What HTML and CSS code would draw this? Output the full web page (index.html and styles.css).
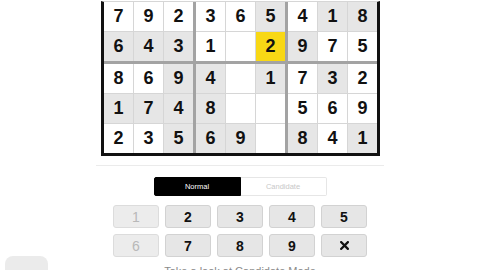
FILE: index.html
```html
<!DOCTYPE html>
<html>
<head>
<meta charset="utf-8">
<link rel="stylesheet" href="styles.css">
</head>
<body>
<div class="page">
  <div class="board">
    <div class="box r2">
      <div class="cell">7</div><div class="cell">9</div><div class="cell">2</div>
      <div class="cell g">6</div><div class="cell g">4</div><div class="cell g">3</div>
    </div>
    <div class="box r2">
      <div class="cell">3</div><div class="cell">6</div><div class="cell g">5</div>
      <div class="cell">1</div><div class="cell"></div><div class="cell y">2</div>
    </div>
    <div class="box r2">
      <div class="cell">4</div><div class="cell g">1</div><div class="cell g">8</div>
      <div class="cell g">9</div><div class="cell">7</div><div class="cell">5</div>
    </div>
    <div class="box">
      <div class="cell">8</div><div class="cell">6</div><div class="cell g">9</div>
      <div class="cell g">1</div><div class="cell g">7</div><div class="cell g">4</div>
      <div class="cell">2</div><div class="cell">3</div><div class="cell g">5</div>
    </div>
    <div class="box">
      <div class="cell g">4</div><div class="cell"></div><div class="cell g">1</div>
      <div class="cell g">8</div><div class="cell"></div><div class="cell"></div>
      <div class="cell g">6</div><div class="cell g">9</div><div class="cell"></div>
    </div>
    <div class="box">
      <div class="cell">7</div><div class="cell g">3</div><div class="cell">2</div>
      <div class="cell">5</div><div class="cell">6</div><div class="cell">9</div>
      <div class="cell g">8</div><div class="cell">4</div><div class="cell g">1</div>
    </div>
  </div>
  <div class="divider"></div>
  <div class="toggle">
    <div class="mode active">Normal</div>
    <div class="mode">Candidate</div>
  </div>
  <div class="keypad">
    <div class="key off">1</div>
    <div class="key">2</div>
    <div class="key">3</div>
    <div class="key">4</div>
    <div class="key">5</div>
    <div class="key off">6</div>
    <div class="key">7</div>
    <div class="key">8</div>
    <div class="key">9</div>
    <div class="key"><svg class="xicon" viewBox="0 0 8 8" width="9" height="9"><path d="M1 1L7 7M7 1L1 7" stroke="#111" stroke-width="2" stroke-linecap="square"/></svg></div>
  </div>
  <div class="hint">Take a look at Candidate Mode</div>
</div>
<div class="fab"></div>
</body>
</html>
```
FILE: styles.css
```css
html, body {
  margin: 0;
  padding: 0;
  background: #fff;
  overflow: hidden;
}
body {
  font-family: "Liberation Sans", Arial, sans-serif;
  width: 480px;
  height: 270px;
}
.page {
  display: flex;
  flex-direction: column;
  align-items: center;
  padding-top: 1px;
}
.board {
  display: grid;
  grid-template-columns: repeat(3, 89px);
  grid-template-rows: 59px 89px;
  gap: 3px;
  background: #a3a3a3;
  border: 3px solid #111;
  border-top: 1px solid #d6d6d6;
  margin-left: 1px;
}
.box {
  display: grid;
  grid-template-columns: repeat(3, 29px);
  grid-template-rows: repeat(3, 29px);
  gap: 1px;
  background: #d6d6d6;
}
.box.r2 {
  grid-template-rows: repeat(2, 29px);
}
.cell {
  background: #fff;
  display: flex;
  align-items: center;
  justify-content: center;
  font-weight: bold;
  font-size: 18px;
  color: #111;
}
.cell.g { background: #e6e6e6; }
.cell.y { background: #f8d815; }
.divider {
  width: 288px;
  height: 1px;
  background: #ebebeb;
  margin-top: 9px;
}
.toggle {
  display: flex;
  margin-top: 11px;
}
.mode {
  width: 86px;
  height: 19px;
  display: flex;
  align-items: center;
  justify-content: center;
  font-size: 7.5px;
  color: #c8c8c8;
  border: 1px solid #e6e6e6;
  border-left: none;
  border-radius: 0 2px 2px 0;
  box-sizing: border-box;
}
.mode.active {
  width: 87px;
  background: #000;
  color: #fff;
  border: 1px solid #000;
  border-radius: 2px 0 0 2px;
}
.keypad {
  display: grid;
  grid-template-columns: repeat(5, 46px);
  grid-auto-rows: 23px;
  gap: 6px;
  margin-top: 9px;
}
.key {
  background: #e6e6e6;
  border: 1px solid #d2d2d2;
  border-radius: 3px;
  box-sizing: border-box;
  display: flex;
  align-items: center;
  justify-content: center;
  font-weight: bold;
  font-size: 14px;
  color: #111;
}
.key.off {
  background: #ececec;
  border-color: #dcdcdc;
  color: #b8b8b8;
  font-weight: normal;
}
.hint {
  margin-top: 8px;
  font-size: 11px;
  color: #8a8a8a;
}
.fab {
  position: fixed;
  left: 5px;
  top: 256px;
  width: 43px;
  height: 30px;
  border-radius: 8px;
  background: #ebebeb;
}
```
